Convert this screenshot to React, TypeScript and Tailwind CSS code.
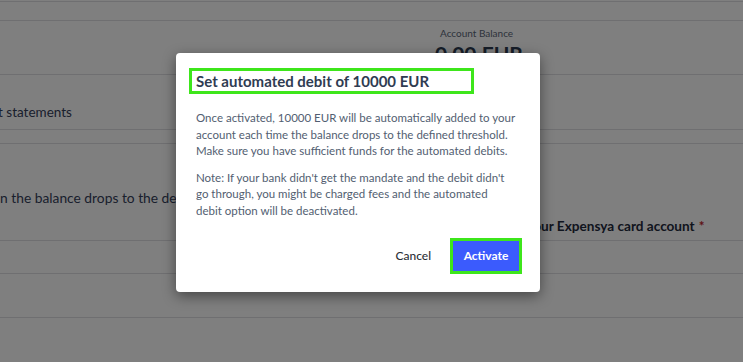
import React from 'react';

export default function App() {
  return (
    <div className="relative w-[743px] h-[362px] overflow-hidden bg-white font-['Lato','Open_Sans',sans-serif] text-[#2c3a50]">
      {/* Page behind the dialog */}
      <div className="flex flex-col">
        <div className="h-[2px] border-b border-[#dedfe2]" />
        <div className="h-[19px] border-b border-[#dedfe2]" />
        <div className="h-[54px] border-b border-[#dedfe2] flex">
          <div className="ml-[440px] flex flex-col">
            <span className="mt-[6px] text-[10px] leading-[12px] text-[#5b6677]">Account Balance</span>
            <span className="-ml-[5px] mt-[3px] text-[21px] leading-[24px] font-bold text-[#2c3a50]">0.00 EUR</span>
          </div>
        </div>
        <div className="h-[55px] border-b border-[#dedfe2] flex items-end pb-[9px]">
          <span className="-ml-[2px] text-[13.5px] leading-[16px] text-[#34405a]">t statements</span>
        </div>
        <div className="h-[14px] border-b border-[#dedfe2]" />
        <div className="h-[97px] border-b border-[#dedfe2]">
          <div className="pt-[46px] text-[13.8px] leading-[16px] text-[#34405a] whitespace-nowrap">
            n the balance drops to the defined threshold
          </div>
          <div className="flex pt-[12px] pl-[526px] text-[13.6px] leading-[16px] font-bold whitespace-nowrap text-[#1f2a3c]">
            Your Expensya card account <span className="ml-[4px] text-[#c0262d]">*</span>
          </div>
        </div>
        <div className="h-[33px] border-b border-[#dedfe2]" />
        <div className="h-[44px] border-b border-[#dedfe2]" />
      </div>

      {/* Dim overlay */}
      <div className="absolute inset-0 bg-black/50" />

      {/* Dialog */}
      <div className="absolute left-[176px] top-[53px] w-[364px] h-[239px] rounded-[4px] bg-white shadow-[0_4px_14px_rgba(0,0,0,0.45)] px-[20px] pt-[15px] flex flex-col">
        <div className="-ml-[7px] w-[285px] h-[26px] border-[3px] border-[#3ee61b] flex items-center pl-[4px]">
          <h2 className="text-[15px] leading-[18px] font-bold text-[#2f3c52] whitespace-nowrap">Set automated debit of 10000 EUR</h2>
        </div>
        <p className="mt-[16px] text-[11.5px] leading-[16.5px] text-[#525e71] whitespace-nowrap">
          Once activated, 10000 EUR will be automatically added to your<br />
          account each time the balance drops to the defined threshold.<br />
          Make sure you have sufficient funds for the automated debits.
        </p>
        <p className="mt-[10px] text-[11.5px] leading-[16.5px] text-[#525e71] whitespace-nowrap">
          Note: If your bank didn't get the mandate and the debit didn't<br />
          go through, you might be charged fees and the automated<br />
          debit option will be deactivated.
        </p>
        <div className="mt-auto mb-[18px] flex items-center justify-end -mr-[2px] gap-[19px]">
          <button className="text-[12px] font-medium text-[#2b2f36]">Cancel</button>
          <div className="border-[3px] border-[#3ee61b]">
            <button className="w-[66px] h-[30px] bg-[#3b5bfd] text-white text-[12px] font-bold">Activate</button>
          </div>
        </div>
      </div>
    </div>
  );
}
